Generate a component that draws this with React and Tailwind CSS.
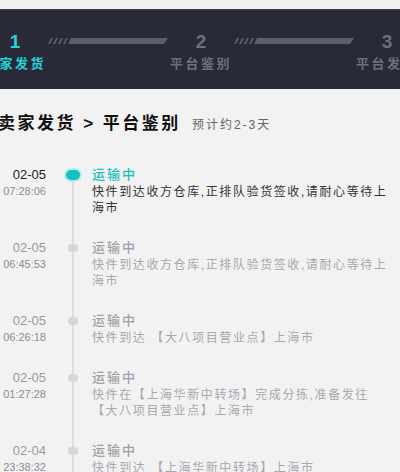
import React from 'react'

const cjk = { fontFamily: '"Liberation Sans", "Noto Sans CJK SC", sans-serif' }

const steps = [
  { n: '1', label: '卖家发货', active: true },
  { n: '2', label: '平台鉴别' },
  { n: '3', label: '平台发货' },
]

const events = [
  { date: '02-05', time: '07:28:06', desc: ['快件到达收方仓库,正排队验货签收,请耐心等待上', '海市'], current: true },
  { date: '02-05', time: '06:45:53', desc: ['快件到达收方仓库,正排队验货签收,请耐心等待上', '海市'] },
  { date: '02-05', time: '06:26:18', desc: ['快件到达 【大八项目营业点】上海市'] },
  { date: '02-05', time: '01:27:28', desc: ['快件在【上海华新中转场】完成分拣,准备发往', '【大八项目营业点】上海市'] },
  { date: '02-04', time: '23:38:32', desc: ['快件到达 【上海华新中转场】上海市'] },
]

const Bar = () => (
  <div className="w-[120px] h-[6px] mt-[10px] shrink-0">
    <svg width="120" height="6" viewBox="0 0 120 6">
      {[0, 5, 10, 15].map(x => (
        <polygon key={x} points={`${x},6 ${x + 2},6 ${x + 5},0 ${x + 3},0`} fill="#5d5e6a" />
      ))}
      <polygon points="20,6 116,6 120,0 23,0" fill="#5d5e6a" />
    </svg>
  </div>
)

const Step = ({ n, label, active }) => (
  <div className="w-[60px] shrink-0 flex flex-col items-center">
    <div className={`text-[19px] font-bold leading-[28px] ${active ? 'text-[#27d0d6]' : 'text-[#6e6f7a]'}`}>{n}</div>
    <div className={`text-[13px] font-bold whitespace-nowrap tracking-[2.5px] leading-[16px] ${active ? 'text-[#27d0d6]' : 'text-[#6e6f7a]'}`}>{label}</div>
  </div>
)

export default function App() {
  return (
    <div className="w-[400px] h-[472px] overflow-hidden bg-[#f2f2f2]" style={cjk}>
      <div className="h-[9px] bg-[#f0f0f0]" />
      <div className="h-[80px] bg-[#292a37] border-t border-[#3b3c48] flex items-start pt-[18px] ml-[-15px] gap-[3px]">
        <Step {...steps[0]} />
        <Bar />
        <Step {...steps[1]} />
        <Bar />
        <Step {...steps[2]} />
      </div>

      <div className="flex items-baseline mt-[22px] ml-[-2px] whitespace-nowrap">
        <span className="text-[17px] font-bold tracking-[2.5px] text-[#111]">卖家发货 &gt; 平台鉴别</span>
        <span className="text-[12px] tracking-[2px] text-[#666] ml-[11px]">预计约2-3天</span>
      </div>

      <div className="mt-[28px]">
        {events.map((e, i) => (
          <div key={i} className="flex">
            <div className="w-[60px] ml-[-14px] text-right shrink-0">
              <div className={`text-[13px] leading-[19px] ${e.current ? 'text-[#222]' : 'text-[#9a9aa2]'}`}>{e.date}</div>
              <div className="text-[11px] leading-[14px] text-[#8d8d95]">{e.time}</div>
            </div>
            <div className="w-[46px] shrink-0 relative">
              <div className={`absolute left-[26px] w-[2px] bg-[#dcdce1] ${i === 0 ? 'top-[10px]' : 'top-0'} bottom-0`} />
              {e.current ? (
                <div className="absolute left-[20px] top-[5px] w-[14px] h-[10px] rounded-full bg-[#16bfc0] ring-2 ring-[#b9ecec]" />
              ) : (
                <div className="absolute left-[22px] top-[6px] w-[10px] h-[8px] rounded-full bg-[#d6d6dc]" />
              )}
            </div>
            <div className="flex-1 pb-[22px]">
              <div className={`text-[13px] font-medium tracking-[2px] leading-[19px] ${e.current ? 'text-[#19bfbf]' : 'text-[#a0a0a8]'}`}>运输中</div>
              {e.desc.map((line, j) => (
                <div key={j} className={`text-[12px] tracking-[1.6px] leading-[16px] whitespace-nowrap ${e.current ? 'text-[#333]' : 'text-[#a8a8b0]'}`}>{line}</div>
              ))}
            </div>
          </div>
        ))}
      </div>
    </div>
  )
}
